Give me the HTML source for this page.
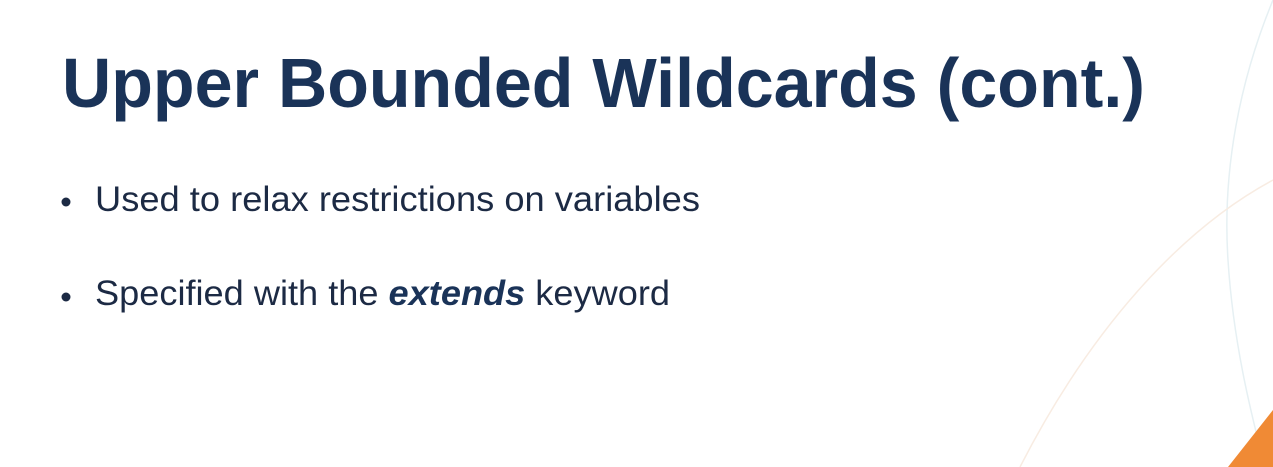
<!DOCTYPE html>
<html><head><style>
html,body{margin:0;padding:0;background:#fff;width:1273px;height:467px;overflow:hidden}
</style></head><body>
<svg width="1273" height="467" viewBox="0 0 1273 467" xmlns="http://www.w3.org/2000/svg">
<rect width="1273" height="467" fill="#fff"/>
<path d="M1273,0 C1240,80 1222,170 1228,260 C1233,340 1250,410 1265,467" fill="none" stroke="#e6f0f3" stroke-width="1.5"/>
<path d="M1273,180 C1180,230 1090,330 1020,467" fill="none" stroke="#f8ece2" stroke-width="1.5"/>
<polygon points="1273,410 1273,467 1228,467" fill="#f08a35"/>
<text x="62" y="107" font-family="Liberation Sans, sans-serif" font-weight="bold" font-size="70" fill="#1a3358" textLength="1083" lengthAdjust="spacingAndGlyphs">Upper Bounded Wildcards (cont.)</text>
<circle cx="66" cy="202" r="4.5" fill="#1c2a44"/>
<circle cx="66" cy="297" r="4.5" fill="#1c2a44"/>
<text x="95" y="211" font-family="Liberation Sans, sans-serif" font-size="35" fill="#1c2a44" textLength="605" lengthAdjust="spacingAndGlyphs">Used to relax restrictions on variables</text>
<text x="95" y="305" font-family="Liberation Sans, sans-serif" font-size="35" fill="#1c2a44" textLength="575" lengthAdjust="spacingAndGlyphs">Specified with the <tspan font-weight="bold" font-style="italic" fill="#1a3358">extends</tspan> keyword</text>
</svg>
</body></html>
